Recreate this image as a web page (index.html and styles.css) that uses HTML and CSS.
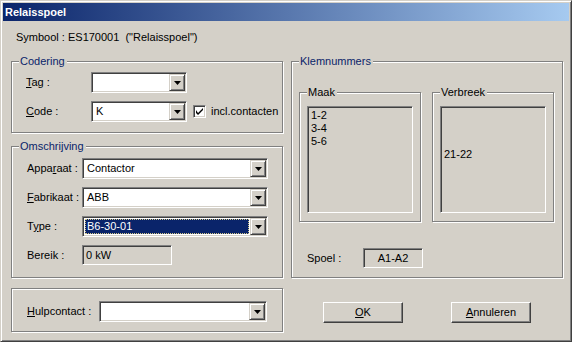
FILE: index.html
```html
<!DOCTYPE html>
<html>
	<head>
		<meta charset="UTF-8">
		<title>Relaisspoel</title>
		<link rel="stylesheet" href="styles.css">
	</head>
	<body>
		<div class="window">
			<!--titel-->
			<div class="titlebar">Relaisspoel</div>
			<div class="client">
				<div class="symbol">Symbool : ES170001 &nbsp;("Relaisspoel")</div>
				<div class="cols">
					<!--linker kolom-->
					<div class="left">
						<div class="group codering">
							<span class="caption">Codering</span>
							<div class="row">
								<label class="lbl lbl-c"><u>T</u>ag :</label>
								<div class="combo combo-s">
									<div class="value"></div>
									<div class="drop"><svg width="7" height="4" viewBox="0 0 7 4"><path d="M0 0h7L3.5 4z" fill="#000"/></svg></div>
								</div>
							</div>
							<div class="row">
								<label class="lbl lbl-c"><u>C</u>ode :</label>
								<div class="combo combo-s">
									<div class="value">K</div>
									<div class="drop"><svg width="7" height="4" viewBox="0 0 7 4"><path d="M0 0h7L3.5 4z" fill="#000"/></svg></div>
								</div>
								<span class="check"><svg width="7" height="7" viewBox="0 0 7 7"><path d="M0 2v3l2 2 5-5V-0L2 5z" fill="#000"/></svg></span>
								<span class="checktext">incl.contacten</span>
							</div>
						</div>

						<div class="group omschrijving">
							<span class="caption">Omschrijving</span>
							<div class="row">
								<label class="lbl lbl-o">Appa<u>r</u>aat :</label>
								<div class="combo combo-l">
									<div class="value">Contactor</div>
									<div class="drop"><svg width="7" height="4" viewBox="0 0 7 4"><path d="M0 0h7L3.5 4z" fill="#000"/></svg></div>
								</div>
							</div>
							<div class="row">
								<label class="lbl lbl-o"><u>F</u>abrikaat :</label>
								<div class="combo combo-l">
									<div class="value">ABB</div>
									<div class="drop"><svg width="7" height="4" viewBox="0 0 7 4"><path d="M0 0h7L3.5 4z" fill="#000"/></svg></div>
								</div>
							</div>
							<div class="row">
								<label class="lbl lbl-o">T<u>y</u>pe :</label>
								<div class="combo combo-l">
									<div class="value selected">B6-30-01</div>
									<div class="drop"><svg width="7" height="4" viewBox="0 0 7 4"><path d="M0 0h7L3.5 4z" fill="#000"/></svg></div>
								</div>
							</div>
							<div class="row row-bereik">
								<label class="lbl lbl-o">Bereik :</label>
								<div class="field field-bereik">0 kW</div>
							</div>
						</div>

						<div class="group hulp">
							<div class="row">
								<label class="lbl lbl-h"><u>H</u>ulpcontact :</label>
								<div class="combo combo-h">
									<div class="value"></div>
									<div class="drop"><svg width="7" height="4" viewBox="0 0 7 4"><path d="M0 0h7L3.5 4z" fill="#000"/></svg></div>
								</div>
							</div>
						</div>
					</div>

					<!--rechter kolom-->
					<div class="right">
						<div class="group klem">
							<span class="caption">Klemnummers</span>
							<div class="subs">
								<div class="group sub">
									<span class="caption black">Maak</span>
									<div class="list">
										<div>1-2</div>
										<div>3-4</div>
										<div>5-6</div>
									</div>
								</div>
								<div class="group sub">
									<span class="caption black">Verbreek</span>
									<div class="list">
										<div>&nbsp;</div>
										<div>&nbsp;</div>
										<div>&nbsp;</div>
										<div>21-22</div>
									</div>
								</div>
							</div>
							<div class="row row-spoel">
								<label class="lbl lbl-s">Spoel :</label>
								<div class="field field-spoel">A1-A2</div>
							</div>
						</div>
						<div class="buttons">
							<div class="btn"><u>O</u>K</div>
							<div class="btn"><u>A</u>nnuleren</div>
						</div>
					</div>
				</div>
			</div>
		</div>
	</body>
</html>
```

FILE: styles.css
```css
*{
	margin: 0;
	padding: 0;
	box-sizing: border-box;
}
body{
	font-family: "Liberation Sans", Arial, sans-serif;
	font-size: 11px;
	line-height: 13px;
	color: #000;
	background: #D4D0C8;
}
.window{
	width: 572px;
	height: 342px;
	background: #D4D0C8;
	border: 1px solid;
	border-color: #D4D0C8 #404040 #404040 #D4D0C8;
	box-shadow: inset 1px 1px 0 #fff, inset -1px -1px 0 #808080;
	padding: 2px;
}
.titlebar{
	height: 18px;
	line-height: 18px;
	padding-left: 2px;
	color: #fff;
	font-weight: bold;
	background: linear-gradient(to right, #0A246A, #A6CAF0);
}
.client{
	padding: 10px 8px 0 8px;
}
.symbol{
	height: 13px;
	padding-left: 5px;
}
.cols{
	display: grid;
	grid-template-columns: 272px 272px;
	column-gap: 8px;
	margin-top: 17px;
}

/* groepskader */
.group{
	position: relative;
	border: 1px solid #808080;
	box-shadow: inset 1px 1px 0 #fff, 1px 1px 0 #fff;
}
.caption{
	position: absolute;
	top: -7px;
	left: 7px;
	padding: 0 2px 0 1px;
	background: #D4D0C8;
	color: #0A246A;
	line-height: 13px;
}
.caption.black{
	color: #000;
}
.row{
	display: flex;
	align-items: center;
}
.lbl{
	display: block;
}
.lbl-c{ width: 65px; }
.lbl-o{ width: 55px; }
.lbl-h{ width: 72px; }
.lbl-s{ width: 56px; }

.codering{
	height: 72px;
	padding: 10px 0 0 14px;
}
.codering .row + .row{
	margin-top: 8px;
}
.omschrijving{
	height: 132px;
	margin-top: 13px;
	padding: 11px 0 0 15px;
}
.omschrijving .row + .row{
	margin-top: 8px;
}
.omschrijving .row-bereik{
	margin-top: 10px;
}
.hulp{
	height: 44px;
	margin-top: 10px;
	padding: 12px 0 0 15px;
}

/* combobox */
.combo{
	display: flex;
	height: 21px;
	background: #fff;
	border: 1px solid;
	border-color: #808080 #fff #fff #808080;
	box-shadow: inset 1px 1px 0 #404040, inset -1px -1px 0 #D4D0C8;
	padding: 1px;
}
.combo-s{ width: 96px; }
.combo-l{ width: 186px; }
.combo-h{ width: 168px; }
.value{
	flex: 1;
	margin: 1px;
	padding-left: 2px;
	height: 15px;
	line-height: 15px;
	white-space: nowrap;
}
.value.selected{
	background: #0A246A;
	color: #fff;
	outline: 1px dotted #D4C88A;
	outline-offset: -1px;
}
.drop{
	width: 16px;
	height: 17px;
	display: flex;
	align-items: center;
	justify-content: center;
	background: #D4D0C8;
	border: 1px solid;
	border-color: #D4D0C8 #404040 #404040 #D4D0C8;
	box-shadow: inset 1px 1px 0 #fff, inset -1px -1px 0 #808080;
}
.drop svg{
	display: block;
}

/* vinkje */
.check{
	width: 13px;
	height: 13px;
	margin-left: 6px;
	display: flex;
	align-items: center;
	justify-content: center;
	background: #fff;
	border: 1px solid;
	border-color: #808080 #fff #fff #808080;
	box-shadow: inset 1px 1px 0 #404040, inset -1px -1px 0 #D4D0C8;
}
.check svg{
	display: block;
}
.checktext{
	margin-left: 5px;
}

/* alleen-lezen velden */
.field{
	height: 20px;
	line-height: 16px;
	border: 1px solid;
	border-color: #808080 #fff #fff #808080;
	box-shadow: inset 1px 1px 0 #404040, inset -1px -1px 0 #D4D0C8;
	padding: 1px 3px;
	background: #D4D0C8;
}
.field-bereik{ width: 90px; }
.field-spoel{
	width: 60px;
	text-align: center;
}

/* klemnummers */
.klem{
	height: 217px;
	padding: 30px 0 0 7px;
}
.subs{
	display: flex;
	gap: 11px;
}
.sub{
	width: 122px;
	height: 130px;
	padding: 13px 0 0 7px;
}
.list{
	width: 106px;
	height: 107px;
	border: 1px solid;
	border-color: #808080 #fff #fff #808080;
	box-shadow: inset 1px 1px 0 #404040, inset -1px -1px 0 #D4D0C8;
	padding: 2px 3px;
}
.list div{
	height: 13px;
}
.row-spoel{
	margin: 26px 0 0 8px;
}

/* knoppen */
.buttons{
	display: flex;
	gap: 48px;
	margin: 24px 0 0 32px;
}
.btn{
	width: 80px;
	height: 21px;
	line-height: 19px;
	text-align: center;
	border: 1px solid;
	border-color: #fff #404040 #404040 #fff;
	box-shadow: inset -1px -1px 0 #808080;
}
```
